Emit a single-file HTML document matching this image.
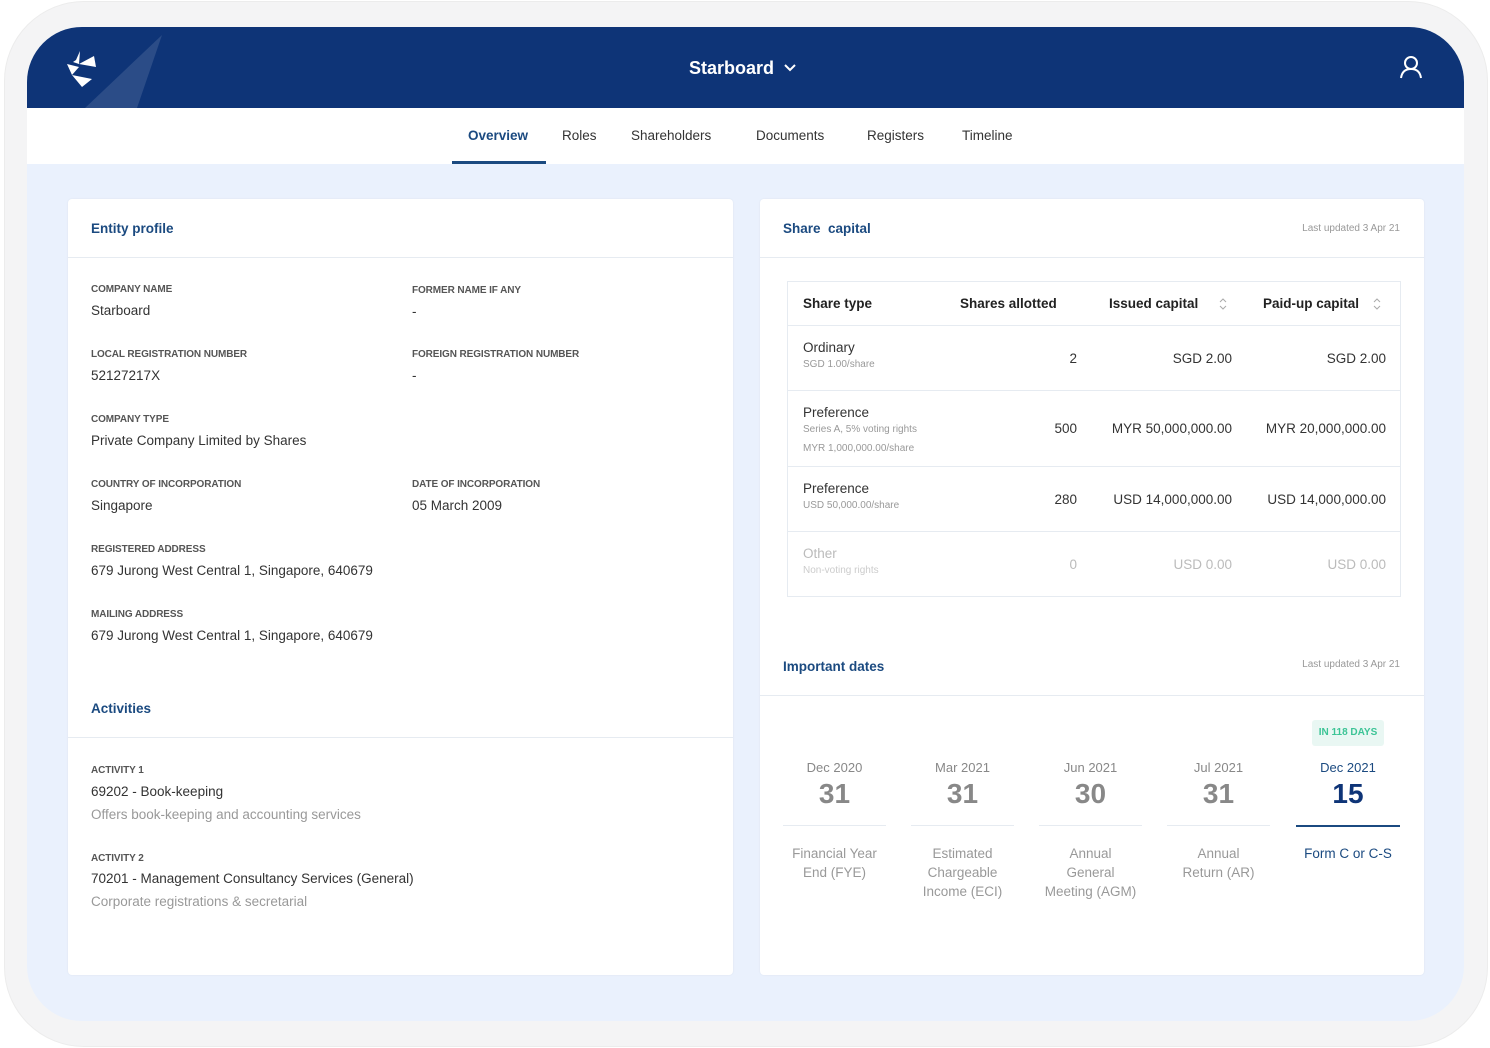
<!DOCTYPE html>
<html><head><meta charset="utf-8"><style>
*{margin:0;padding:0;box-sizing:border-box}
body{width:1490px;height:1048px;background:#fff;font-family:"Liberation Sans",sans-serif;position:relative;overflow:hidden;color:#333}
.a{position:absolute;white-space:nowrap;line-height:16px}
.frame{position:absolute;left:4px;top:1px;width:1484px;height:1046px;border-radius:80px;background:#f4f4f5;border:1px solid #ececec}
.screen{position:absolute;left:27px;top:27px;width:1437px;height:994px;border-radius:55px;background:#eaf1fd;overflow:hidden}
.hdr{position:absolute;left:0;top:0;width:1437px;height:81px;background:#0e3477}
.tabs{position:absolute;left:0;top:81px;width:1437px;height:56px;background:#fff}
.card{position:absolute;background:#fff;border-radius:4px;box-shadow:0 0 2px rgba(0,0,0,.06)}
.ttl{color:#1b4a80;font-weight:bold;font-size:13.5px}
.lbl{font-size:10px;font-weight:bold;color:#555;letter-spacing:-.1px}
.val{font-size:13.5px;color:#333}
.sub{font-size:13.5px;color:#999}
.hr{position:absolute;height:1px;background:#e6ebf1}
.sm{font-size:10px;color:#999}
.th{font-size:13.5px;font-weight:bold;color:#222}
.r{text-align:right}
.c{text-align:center}
</style></head><body>
<div class="frame"></div>
<div class="screen">
 <div class="hdr">
  <svg width="200" height="81" style="position:absolute;left:0;top:0">
   <polygon points="58,81 135,8 110,81" fill="#fff" fill-opacity=".12"/>
   <polygon points="53,24 49,33 46,35 52,37" fill="#fff"/>
   <polygon points="52,37 67,29 69,40" fill="#fff"/>
   <polygon points="40,37 52,40 45,48" fill="#fff"/>
   <polygon points="45,48 65,52 55,60" fill="#fff"/>
  </svg>
  <div class="a" style="left:662px;top:31px;color:#fff;font-size:18px;line-height:20px;font-weight:bold">Starboard</div>
  <svg width="14" height="10" style="position:absolute;left:756px;top:36px"><path d="M2 2l5 5 5-5" stroke="#fff" stroke-width="2" fill="none"/></svg>
  <svg width="26" height="26" style="position:absolute;left:1371px;top:28px"><circle cx="13" cy="8" r="6" stroke="#fff" stroke-width="2" fill="none"/><path d="M3 23c1-7 5-9 10-9s9 2 10 9" stroke="#fff" stroke-width="2" fill="none"/></svg>
 </div>
 <div class="tabs">
  <div class="a" style="left:441px;top:20px;font-size:13.5px;color:#1b4a80;font-weight:bold">Overview</div>
  <div style="position:absolute;left:425px;top:53px;width:94px;height:3px;background:#1b4a80"></div>
  <div class="a" style="left:535px;top:20px;font-size:13.5px">Roles</div>
  <div class="a" style="left:604px;top:20px;font-size:13.5px">Shareholders</div>
  <div class="a" style="left:729px;top:20px;font-size:13.5px">Documents</div>
  <div class="a" style="left:840px;top:20px;font-size:13.5px">Registers</div>
  <div class="a" style="left:935px;top:20px;font-size:13.5px">Timeline</div>
 </div>
</div>

<div class="card" style="left:68px;top:199px;width:665px;height:776px"></div>
<div class="card" style="left:760px;top:199px;width:664px;height:776px"></div>

<div class="a ttl" style="left:91px;top:221px">Entity profile</div>
<div class="hr" style="left:68px;top:257px;width:665px"></div>
<div class="a lbl" style="left:91px;top:282px">COMPANY NAME</div><div class="a val" style="left:91px;top:303px">Starboard</div>
<div class="a lbl" style="left:412px;top:283px">FORMER NAME IF ANY</div><div class="a val" style="left:412px;top:304px">-</div>
<div class="a lbl" style="left:91px;top:347px">LOCAL REGISTRATION NUMBER</div><div class="a val" style="left:91px;top:368px">52127217X</div>
<div class="a lbl" style="left:412px;top:347px">FOREIGN REGISTRATION NUMBER</div><div class="a val" style="left:412px;top:368px">-</div>
<div class="a lbl" style="left:91px;top:412px">COMPANY TYPE</div><div class="a val" style="left:91px;top:433px">Private Company Limited by Shares</div>
<div class="a lbl" style="left:91px;top:477px">COUNTRY OF INCORPORATION</div><div class="a val" style="left:91px;top:498px">Singapore</div>
<div class="a lbl" style="left:412px;top:477px">DATE OF INCORPORATION</div><div class="a val" style="left:412px;top:498px">05 March 2009</div>
<div class="a lbl" style="left:91px;top:542px">REGISTERED ADDRESS</div><div class="a val" style="left:91px;top:563px">679 Jurong West Central 1, Singapore, 640679</div>
<div class="a lbl" style="left:91px;top:607px">MAILING ADDRESS</div><div class="a val" style="left:91px;top:628px">679 Jurong West Central 1, Singapore, 640679</div>
<div class="a ttl" style="left:91px;top:701px">Activities</div>
<div class="hr" style="left:68px;top:737px;width:665px"></div>
<div class="a lbl" style="left:91px;top:763px">ACTIVITY 1</div><div class="a val" style="left:91px;top:784px">69202 - Book-keeping</div>
<div class="a sub" style="left:91px;top:807px">Offers book-keeping and accounting services</div>
<div class="a lbl" style="left:91px;top:851px">ACTIVITY 2</div><div class="a val" style="left:91px;top:871px">70201 - Management Consultancy Services (General)</div>
<div class="a sub" style="left:91px;top:894px">Corporate registrations &amp; secretarial</div>

<div class="a ttl" style="left:783px;top:221px">Share&nbsp; capital</div>
<div class="a sm" style="left:1300px;top:221px;width:100px;text-align:right">Last updated 3 Apr 21</div>
<div class="hr" style="left:760px;top:257px;width:664px"></div>
<div style="position:absolute;left:787px;top:281px;width:614px;height:316px;border:1px solid #e6ebf1"></div>
<div class="a th" style="left:803px;top:296px">Share type</div>
<div class="a th" style="left:960px;top:296px">Shares allotted</div>
<div class="a th" style="left:1109px;top:296px">Issued capital</div>
<div class="a th" style="left:1263px;top:296px">Paid-up capital</div>
<svg width="10" height="16" style="position:absolute;left:1218px;top:296px"><path d="M2 6l3-3 3 3M2 10l3 3 3-3" stroke="#aaa" fill="none"/></svg>
<svg width="10" height="16" style="position:absolute;left:1372px;top:296px"><path d="M2 6l3-3 3 3M2 10l3 3 3-3" stroke="#aaa" fill="none"/></svg>
<div class="hr" style="left:788px;top:325px;width:612px"></div>
<div class="hr" style="left:788px;top:390px;width:612px"></div>
<div class="hr" style="left:788px;top:466px;width:612px"></div>
<div class="hr" style="left:788px;top:531px;width:612px"></div>

<div class="a val" style="left:803px;top:340px">Ordinary</div><div class="a sm" style="left:803px;top:357px">SGD 1.00/share</div>
<div class="a val r" style="left:977px;top:351px;width:100px">2</div>
<div class="a val r" style="left:1072px;top:351px;width:160px">SGD 2.00</div>
<div class="a val r" style="left:1226px;top:351px;width:160px">SGD 2.00</div>

<div class="a val" style="left:803px;top:405px">Preference</div><div class="a sm" style="left:803px;top:422px">Series A, 5% voting rights</div><div class="a sm" style="left:803px;top:441px">MYR 1,000,000.00/share</div>
<div class="a val r" style="left:977px;top:421px;width:100px">500</div>
<div class="a val r" style="left:1072px;top:421px;width:160px">MYR 50,000,000.00</div>
<div class="a val r" style="left:1226px;top:421px;width:160px">MYR 20,000,000.00</div>

<div class="a val" style="left:803px;top:481px">Preference</div><div class="a sm" style="left:803px;top:498px">USD 50,000.00/share</div>
<div class="a val r" style="left:977px;top:492px;width:100px">280</div>
<div class="a val r" style="left:1072px;top:492px;width:160px">USD 14,000,000.00</div>
<div class="a val r" style="left:1226px;top:492px;width:160px">USD 14,000,000.00</div>

<div class="a val" style="left:803px;top:546px;color:#bbb">Other</div><div class="a sm" style="left:803px;top:563px;color:#ccc">Non-voting rights</div>
<div class="a val r" style="left:977px;top:557px;width:100px;color:#bbb">0</div>
<div class="a val r" style="left:1072px;top:557px;width:160px;color:#bbb">USD 0.00</div>
<div class="a val r" style="left:1226px;top:557px;width:160px;color:#bbb">USD 0.00</div>

<div class="a ttl" style="left:783px;top:659px">Important dates</div>
<div class="a sm" style="left:1300px;top:657px;width:100px;text-align:right">Last updated 3 Apr 21</div>
<div class="hr" style="left:760px;top:695px;width:664px"></div>
<div style="position:absolute;left:1312px;top:720px;width:72px;height:26px;background:#e9f7f3;border-radius:3px;color:#3cc496;font-size:10px;font-weight:bold;text-align:center;line-height:26px">IN 118 DAYS</div>

<div class="a c" style="left:783px;top:760px;width:103px;font-size:13px;color:#888">Dec 2020</div>
<div class="a c" style="left:783px;top:779px;width:103px;font-size:28px;line-height:30px;font-weight:bold;color:#888">31</div>
<div class="hr" style="left:783px;top:825px;width:103px"></div>
<div class="a c" style="left:765px;top:844px;width:139px;font-size:13.5px;line-height:19px;color:#999">Financial Year<br>End (FYE)</div>

<div class="a c" style="left:911px;top:760px;width:103px;font-size:13px;color:#888">Mar 2021</div>
<div class="a c" style="left:911px;top:779px;width:103px;font-size:28px;line-height:30px;font-weight:bold;color:#888">31</div>
<div class="hr" style="left:911px;top:825px;width:103px"></div>
<div class="a c" style="left:893px;top:844px;width:139px;font-size:13.5px;line-height:19px;color:#999">Estimated<br>Chargeable<br>Income (ECI)</div>

<div class="a c" style="left:1039px;top:760px;width:103px;font-size:13px;color:#888">Jun 2021</div>
<div class="a c" style="left:1039px;top:779px;width:103px;font-size:28px;line-height:30px;font-weight:bold;color:#888">30</div>
<div class="hr" style="left:1039px;top:825px;width:103px"></div>
<div class="a c" style="left:1021px;top:844px;width:139px;font-size:13.5px;line-height:19px;color:#999">Annual<br>General<br>Meeting (AGM)</div>

<div class="a c" style="left:1167px;top:760px;width:103px;font-size:13px;color:#888">Jul 2021</div>
<div class="a c" style="left:1167px;top:779px;width:103px;font-size:28px;line-height:30px;font-weight:bold;color:#888">31</div>
<div class="hr" style="left:1167px;top:825px;width:103px"></div>
<div class="a c" style="left:1149px;top:844px;width:139px;font-size:13.5px;line-height:19px;color:#999">Annual<br>Return (AR)</div>

<div class="a c" style="left:1296px;top:760px;width:104px;font-size:13px;color:#1b4a80">Dec 2021</div>
<div class="a c" style="left:1296px;top:779px;width:104px;font-size:28px;line-height:30px;font-weight:bold;color:#0e3477">15</div>
<div style="position:absolute;left:1296px;top:825px;width:104px;height:2px;background:#1b4a80"></div>
<div class="a c" style="left:1290px;top:844px;width:116px;font-size:13.5px;line-height:19px;color:#1b4a80">Form C or C-S</div>
</body></html>
